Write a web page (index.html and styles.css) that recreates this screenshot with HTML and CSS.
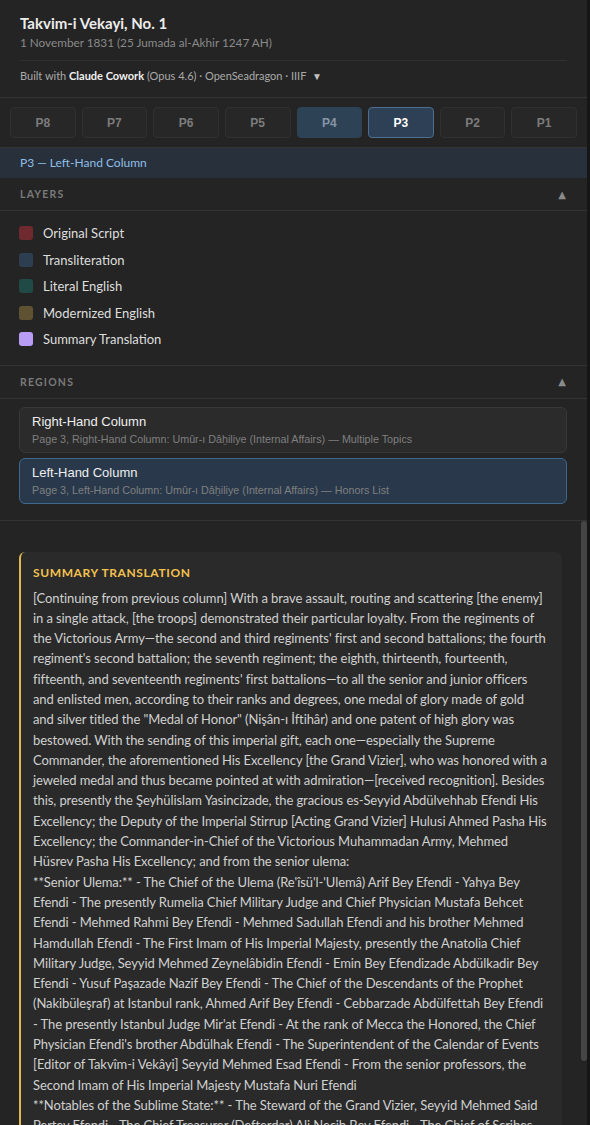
FILE: index.html
```html
<!DOCTYPE html>
<html lang="en">
<head>
<meta charset="utf-8">
<title>Takvim-i Vekayi, No. 1</title>
<link rel="stylesheet" href="styles.css">
</head>
<body>
<aside class="sidebar">
  <header class="header">
    <h1 class="title">Takvim-i Vekayi, No. 1</h1>
    <div class="date">1 November 1831 (25 Jumada al-Akhir 1247 AH)</div>
    <div class="built">Built with <strong>Claude Cowork</strong> (Opus 4.6) · OpenSeadragon · IIIF <span class="caret">▼</span></div>
  </header>

  <nav class="tabs">
    <button class="tab">P8</button>
    <button class="tab">P7</button>
    <button class="tab">P6</button>
    <button class="tab">P5</button>
    <button class="tab tab-hover">P4</button>
    <button class="tab tab-active">P3</button>
    <button class="tab">P2</button>
    <button class="tab">P1</button>
  </nav>

  <div class="current">P3 — Left-Hand Column</div>

  <section class="section">
    <div class="section-head"><span>LAYERS</span><span class="tri">▲</span></div>
    <ul class="layers">
      <li class="layer"><span class="swatch sw-orig"></span>Original Script</li>
      <li class="layer"><span class="swatch sw-trans"></span>Transliteration</li>
      <li class="layer"><span class="swatch sw-lit"></span>Literal English</li>
      <li class="layer"><span class="swatch sw-mod"></span>Modernized English</li>
      <li class="layer"><span class="swatch sw-sum"></span>Summary Translation</li>
    </ul>
  </section>

  <section class="section">
    <div class="section-head"><span>REGIONS</span><span class="tri">▲</span></div>
    <div class="regions">
      <div class="region">
        <div class="region-title">Right-Hand Column</div>
        <div class="region-sub">Page 3, Right-Hand Column: Umûr-ı Dâẖiliye (Internal Affairs) — Multiple Topics</div>
      </div>
      <div class="region region-active">
        <div class="region-title">Left-Hand Column</div>
        <div class="region-sub">Page 3, Left-Hand Column: Umûr-ı Dâẖiliye (Internal Affairs) — Honors List</div>
      </div>
    </div>
  </section>

  <div class="reader-wrap">
    <div class="reader">
      <article class="summary">
        <h2 class="summary-head">SUMMARY TRANSLATION</h2>
        <p class="summary-text">[Continuing from previous column] With a brave assault, routing and scattering [the enemy] in a single attack, [the troops] demonstrated their particular loyalty. From the regiments of the Victorious Army—the second and third regiments' first and second battalions; the fourth regiment's second battalion; the seventh regiment; the eighth, thirteenth, fourteenth, fifteenth, and seventeenth regiments' first battalions—to all the senior and junior officers and enlisted men, according to their ranks and degrees, one medal of glory made of gold and silver titled the "Medal of Honor" (Nişân-ı İftihâr) and one patent of high glory was bestowed. With the sending of this imperial gift, each one—especially the Supreme Commander, the aforementioned His Excellency [the Grand Vizier], who was honored with a jeweled medal and thus became pointed at with admiration—[received recognition]. Besides this, presently the Şeyhülislam Yasincizade, the gracious es-Seyyid Abdülvehhab Efendi His Excellency; the Deputy of the Imperial Stirrup [Acting Grand Vizier] Hulusi Ahmed Pasha His Excellency; the Commander-in-Chief of the Victorious Muhammadan Army, Mehmed Hüsrev Pasha His Excellency; and from the senior ulema:
**Senior Ulema:** - The Chief of the Ulema (Re'îsü'l-'Ulemâ) Arif Bey Efendi - Yahya Bey Efendi - The presently Rumelia Chief Military Judge and Chief Physician Mustafa Behcet Efendi - Mehmed Rahmi Bey Efendi - Mehmed Sadullah Efendi and his brother Mehmed Hamdullah Efendi - The First Imam of His Imperial Majesty, presently the Anatolia Chief Military Judge, Seyyid Mehmed Zeynelâbidin Efendi - Emin Bey Efendizade Abdülkadir Bey Efendi - Yusuf Paşazade Nazif Bey Efendi - The Chief of the Descendants of the Prophet (Nakibüleşraf) at Istanbul rank, Ahmed Arif Bey Efendi - Cebbarzade Abdülfettah Bey Efendi - The presently Istanbul Judge Mir'at Efendi - At the rank of Mecca the Honored, the Chief Physician Efendi's brother Abdülhak Efendi - The Superintendent of the Calendar of Events [Editor of Takvîm-i Vekâyi] Seyyid Mehmed Esad Efendi - From the senior professors, the Second Imam of His Imperial Majesty Mustafa Nuri Efendi
**Notables of the Sublime State:** - The Steward of the Grand Vizier, Seyyid Mehmed Said Pertev Efendi - The Chief Treasurer (Defterdar) Ali Necib Bey Efendi - The Chief of Scribes Mehmed Akif Efendi - The Chief Sergeant Ahmed Bey Efendi - The Chief Physician Efendi and the other officials of the Sublime State, according to their ranks, were honored with the same medal.</p>
      </article>
    </div>
    <div class="scroll-thumb"></div>
  </div>
</aside>
</body>
</html>
```

FILE: styles.css
```css
* { box-sizing: border-box; }
html, body { margin: 0; padding: 0; }
body {
  background: #161616;
  font-family: Lato, "Open Sans", sans-serif;
  color: #d4d4d4;
  width: 590px;
  height: 1125px;
  overflow: hidden;
}
.sidebar {
  width: 587px;
  height: 1125px;
  background: #242424;
  display: flex;
  flex-direction: column;
}
.header {
  padding: 13px 20px 0;
  border-bottom: 1px solid #333;
}
.title {
  margin: 0;
  font-size: 15px;
  font-weight: 700;
  color: #ececec;
  line-height: 21px;
}
.date {
  font-size: 11.75px;
  color: #8a8a8a;
  line-height: 18px;
  padding-bottom: 8px;
  border-bottom: 1px solid #303030;
}
.built {
  font-size: 11px;
  color: #aaaaaa;
  line-height: 16px;
  height: 36px;
  padding: 7px 0 0;
}
.built strong { color: #f0f0f0; font-weight: 700; }
.caret { font-size: 10px; margin-left: 3px; color: #c0c0c0; }

.tabs {
  display: grid;
  grid-template-columns: repeat(8, 1fr);
  gap: 6px;
  padding: 9px 10px 9px;
  border-bottom: 1px solid #333;
}
.tab {
  height: 31px;
  background: #272727;
  border: 1px solid #303030;
  border-radius: 4px;
  color: #7c7c7c;
  font-family: "Liberation Sans", Arial, sans-serif;
  font-weight: 700;
  font-size: 12px;
  padding: 0;
}
.tab-hover { background: #2e4256; border-color: #2e4256; color: #8796a6; }
.tab-active { background: #2d4055; border-color: #4b6f8e; color: #ffffff; }

.current {
  background: #28303c;
  color: #8fbfe6;
  font-size: 12px;
  line-height: 30px;
  padding: 0 20px;
}

.section { border-bottom: 1px solid #333; }
.section-head {
  display: flex;
  justify-content: space-between;
  align-items: center;
  height: 33px;
  padding: 0 20px;
  border-bottom: 1px solid #333;
  font-size: 10.5px;
  font-weight: 700;
  letter-spacing: 1.2px;
  color: #7a7a7a;
}
.tri {
  font-family: "DejaVu Sans", sans-serif;
  font-size: 10px;
  color: #8a8a8a;
  letter-spacing: 0;
  margin-right: 1px;
}

.layers {
  list-style: none;
  margin: 0;
  padding: 9px 19px 12px;
  display: flex;
  flex-direction: column;
}
.layer {
  display: flex;
  align-items: center;
  gap: 10px;
  height: 26.5px;
  font-size: 13px;
  color: #dedede;
}
.swatch { width: 14px; height: 14px; border-radius: 3px; flex: none; }
.sw-orig { background: #6e2a2f; }
.sw-trans { background: #2c3e50; }
.sw-lit { background: #1f4a45; }
.sw-mod { background: #5f5232; }
.sw-sum { background: #b99cf5; }

.regions {
  display: flex;
  flex-direction: column;
  gap: 5px;
  padding: 8px 20px 16px 19px;
}
.region {
  background: #2b2b2b;
  border: 1px solid #383838;
  border-radius: 6px;
  padding: 5px 12px 6px;
  font-family: "Liberation Sans", Arial, sans-serif;
}
.region-active { background: #29394b; border-color: #3c6a8f; }
.region-title { font-size: 13px; color: #eeeeee; line-height: 17px; }
.region-sub { font-size: 10.75px; color: #7f7f7f; line-height: 14px; margin-top: 2px; }

.reader-wrap {
  flex: 1;
  min-height: 0;
  position: relative;
}
.reader {
  height: 100%;
  overflow: hidden;
  padding: 31px 25px 20px 19px;
}
.scroll-thumb {
  position: absolute;
  top: 0;
  right: 0;
  width: 6px;
  height: 540px;
  background: #454545;
  border-radius: 3px;
}

.summary {
  background: #2a2a2a;
  border-left: 2px solid #e0b94e;
  border-radius: 6px;
  padding: 12px 15px 14px 12px;
}
.summary-head {
  margin: 0 0 6px;
  font-size: 12px;
  font-weight: 700;
  letter-spacing: 0.6px;
  color: #f2c14f;
  line-height: 18px;
}
.summary-text {
  margin: 0;
  white-space: pre-line;
  font-size: 13px;
  letter-spacing: -0.09px;
  line-height: 20.3px;
  color: #d0d0d0;
}
```
